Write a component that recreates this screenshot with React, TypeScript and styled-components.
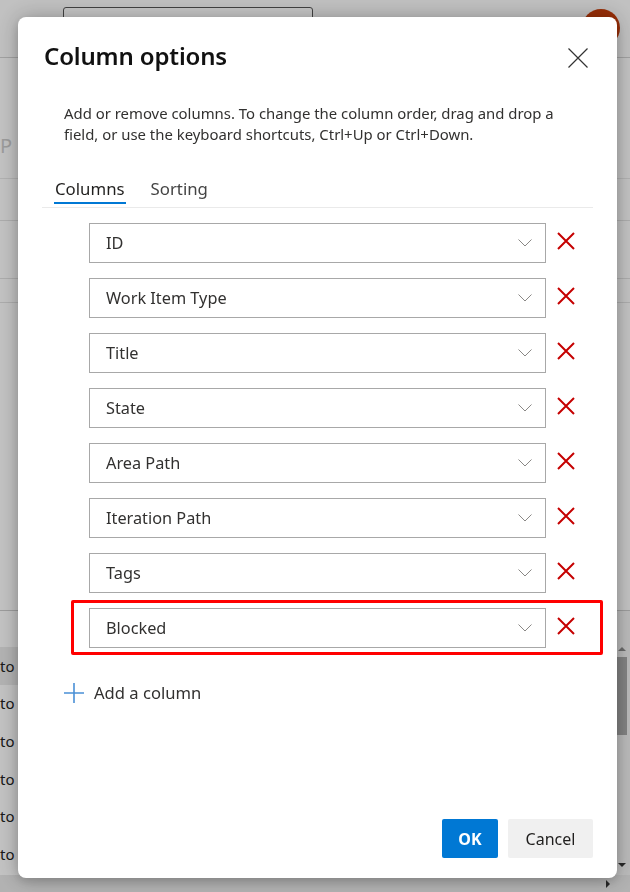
import React from "react";
import styled, { createGlobalStyle, css } from "styled-components";

const GlobalStyle = createGlobalStyle`
  html, body { margin: 0; padding: 0; }
  body {
    width: 630px;
    height: 892px;
    overflow: hidden;
    font-family: "Segoe UI", "Noto Sans", "Open Sans", sans-serif;
    background: #ffffff;
  }
  * { box-sizing: border-box; }
`;

/* ---------- background page ---------- */
const Page = styled.div`
  width: 630px;
  height: 892px;
  display: flex;
  flex-direction: column;
  background: #fafafa;
`;

const TopBar = styled.header`
  height: 58px;
  flex: none;
  display: flex;
  align-items: flex-start;
  justify-content: space-between;
  padding: 7px 10px 0 63px;
  border-bottom: 1px solid #cfcfcf;
  background: #f8f8f8;
`;

const SearchBox = styled.div`
  width: 250px;
  height: 32px;
  border: 1px solid #555;
  border-radius: 3px;
  background: #fff;
`;

const Avatar = styled.div`
  width: 38px;
  height: 38px;
  border-radius: 50%;
  background: #c43c0a;
  margin-top: 2px;
`;

const Content = styled.div`
  flex: 1;
  display: flex;
  flex-direction: column;
`;

const Toolbar = styled.div`
  height: 63px;
  margin-top: 58px;
  border-bottom: 1px solid #e4e4e4;
  display: flex;
  align-items: flex-start;
  padding: 16px 0 0 0;
  font-size: 20px;
  color: #c8c8c8;
  gap: 10px;
`;

const Line = styled.div<{ $h: number }>`
  height: ${(p) => p.$h}px;
  border-bottom: 1px solid #dedede;
`;

const Grid = styled.div`
  margin-top: auto;
  height: 282px;
  display: grid;
  grid-template-columns: 1fr 17px;
  grid-template-rows: 1fr 17px;
  border-top: 1px solid #c9c9c9;
`;

const GridRows = styled.div`
  padding-top: 36px;
  display: flex;
  flex-direction: column;
`;

const GridRow = styled.div<{ $selected?: boolean }>`
  height: 37.6px;
  display: flex;
  align-items: center;
  font-size: 15px;
  color: #222;
  background: ${(p) => (p.$selected ? "#e6e6e6" : "transparent")};
`;

const VScroll = styled.div`
  background: #f0f0f0;
  display: flex;
  flex-direction: column;
  align-items: center;
  padding-top: 36px;
`;

const Thumb = styled.div`
  width: 11px;
  height: 78px;
  margin-top: 6px;
  background: #a8a8a8;
`;

const HScroll = styled.div`
  grid-column: 1 / span 2;
  background: #e4e4e4;
  display: flex;
  justify-content: flex-end;
  align-items: center;
  padding-right: 20px;
`;

const ArrowUp = styled.div`
  width: 0;
  height: 0;
  border-left: 4px solid transparent;
  border-right: 4px solid transparent;
  border-bottom: 4px solid #8a8a8a;
`;

const ArrowDown = styled.div`
  width: 0;
  height: 0;
  margin-top: auto;
  margin-bottom: 8px;
  border-left: 4px solid transparent;
  border-right: 4px solid transparent;
  border-top: 4px solid #333;
`;

const ArrowRight = styled.div`
  width: 0;
  height: 0;
  border-top: 4px solid transparent;
  border-bottom: 4px solid transparent;
  border-left: 4px solid #333;
`;

/* ---------- overlay + dialog ---------- */
const Scrim = styled.div`
  position: fixed;
  inset: 0;
  background: rgba(0, 0, 0, 0.22);
`;

const Dialog = styled.div`
  position: fixed;
  left: 18px;
  top: 17px;
  width: 599px;
  height: 861px;
  background: #fff;
  border-radius: 8px;
  box-shadow: 0 0 22px rgba(0, 0, 0, 0.28), 0 4px 10px rgba(0, 0, 0, 0.12);
  display: flex;
  flex-direction: column;
  color: #201f1e;
`;

const Header = styled.div`
  display: flex;
  align-items: center;
  justify-content: space-between;
  padding: 22px 24px 0 26px;
`;

const Title = styled.h1`
  margin: 0;
  font-size: 24px;
  line-height: 32px;
  font-weight: 600;
  color: #111;
  letter-spacing: -0.15px;
`;

const CloseButton = styled.button`
  width: 30px;
  height: 30px;
  border: 0;
  background: transparent;
  padding: 0;
  display: flex;
  align-items: center;
  justify-content: center;
  cursor: pointer;
  margin-top: 4px;
`;

const Description = styled.p`
  margin: 30px 0 0 46px;
  width: 505px;
  font-size: 14.9px;
  line-height: 21px;
  color: #323130;
`;

const Tabs = styled.div`
  margin: 33px 24px 0 24px;
  display: flex;
  gap: 24px;
  padding-left: 12px;
  border-bottom: 1px solid #eaeaea;
`;

const Tab = styled.div<{ $active?: boolean }>`
  font-size: 16.8px;
  line-height: 22px;
  padding: 0 1px 7px 1px;
  color: ${(p) => (p.$active ? "#201f1e" : "#444")};
  position: relative;
  ${(p) =>
    p.$active &&
    css`
      &::after {
        content: "";
        position: absolute;
        left: 0;
        right: 0;
        bottom: 3px;
        height: 2px;
        background: #0078d4;
      }
    `}
`;

const List = styled.div`
  margin: 15px 0 0 71px;
  display: flex;
  flex-direction: column;
  align-items: flex-start;
  gap: 15px;
`;

const Row = styled.div<{ $highlight?: boolean }>`
  position: relative;
  display: flex;
  align-items: center;
  ${(p) =>
    p.$highlight &&
    css`
      &::after {
        content: "";
        position: absolute;
        left: -18px;
        top: -8px;
        right: -17px;
        bottom: -7px;
        border: 3px solid #ff0000;
        border-radius: 2px;
        pointer-events: none;
      }
    `}
`;

const Select = styled.div`
  width: 457px;
  height: 40px;
  border: 1px solid #a8a8a8;
  display: flex;
  align-items: center;
  justify-content: space-between;
  padding: 0 13px 0 16px;
  font-size: 16.3px;
  color: #323130;
`;

const RemoveButton = styled.button`
  width: 40px;
  height: 36px;
  border: 0;
  background: transparent;
  padding: 0;
  display: flex;
  align-items: center;
  justify-content: center;
  margin-top: -4px;
`;

const AddButton = styled.button`
  margin: 33px 0 0 46px;
  align-self: flex-start;
  border: 0;
  background: transparent;
  padding: 0;
  display: flex;
  align-items: center;
  gap: 10px;
  font-family: inherit;
  font-size: 16.6px;
  color: #323130;
`;

const Footer = styled.div`
  margin-top: auto;
  display: flex;
  justify-content: flex-end;
  gap: 10px;
  padding: 0 24px 20px 0;
`;

const Button = styled.button<{ $primary?: boolean }>`
  height: 39px;
  padding: 0;
  border: 0;
  border-radius: 2px;
  font-family: inherit;
  font-size: 16px;
  font-weight: ${(p) => (p.$primary ? 700 : 400)};
  background: ${(p) => (p.$primary ? "#0078d4" : "#f0f0f0")};
  color: ${(p) => (p.$primary ? "#fff" : "#201f1e")};
  width: ${(p) => (p.$primary ? "56px" : "85px")};
`;

const Chevron = () => (
  <svg width="14" height="8" viewBox="0 0 14 8">
    <polyline points="0.5,0.5 7,7 13.5,0.5" fill="none" stroke="#8a8886" strokeWidth="1" />
  </svg>
);

const RedX = () => (
  <svg width="18" height="18" viewBox="0 0 18 18">
    <path d="M1 1 L17 17 M17 1 L1 17" stroke="#c50000" strokeWidth="2" />
  </svg>
);

const CloseIcon = () => (
  <svg width="20" height="20" viewBox="0 0 20 20">
    <path d="M0.5 0.5 L19.5 19.5 M19.5 0.5 L0.5 19.5" stroke="#333" strokeWidth="1.2" />
  </svg>
);

const PlusIcon = () => (
  <svg width="20" height="20" viewBox="0 0 20 20">
    <path d="M10 0 V20 M0 10 H20" stroke="#4a90d6" strokeWidth="1.6" />
  </svg>
);

const columns = [
  "ID",
  "Work Item Type",
  "Title",
  "State",
  "Area Path",
  "Iteration Path",
  "Tags",
  "Blocked",
];

export default function App() {
  return (
    <>
      <GlobalStyle />
      <Page>
        <TopBar>
          <SearchBox />
          <Avatar />
        </TopBar>
        <Content>
          <Toolbar>
            <span>P</span>
            <span>F</span>
          </Toolbar>
          <Line $h={42} />
          <Line $h={58} />
          <Line $h={24} />
          <Grid>
            <GridRows>
              {[0, 1, 2, 3, 4, 5].map((i) => (
                <GridRow key={i} $selected={i === 0}>
                  to
                </GridRow>
              ))}
            </GridRows>
            <VScroll>
              <ArrowUp />
              <Thumb />
              <ArrowDown />
            </VScroll>
            <HScroll>
              <ArrowRight />
            </HScroll>
          </Grid>
        </Content>
      </Page>
      <Scrim />
      <Dialog role="dialog" aria-label="Column options">
        <Header>
          <Title>Column options</Title>
          <CloseButton aria-label="Close">
            <CloseIcon />
          </CloseButton>
        </Header>
        <Description>
          Add or remove columns. To change the column order, drag and drop a field, or use the
          keyboard shortcuts, Ctrl+Up or Ctrl+Down.
        </Description>
        <Tabs>
          <Tab $active>Columns</Tab>
          <Tab>Sorting</Tab>
        </Tabs>
        <List>
          {columns.map((c) => (
            <Row key={c} $highlight={c === "Blocked"}>
              <Select>
                <span>{c}</span>
                <Chevron />
              </Select>
              <RemoveButton aria-label={`Remove ${c}`}>
                <RedX />
              </RemoveButton>
            </Row>
          ))}
        </List>
        <AddButton>
          <PlusIcon />
          Add a column
        </AddButton>
        <Footer>
          <Button $primary>OK</Button>
          <Button>Cancel</Button>
        </Footer>
      </Dialog>
    </>
  );
}
